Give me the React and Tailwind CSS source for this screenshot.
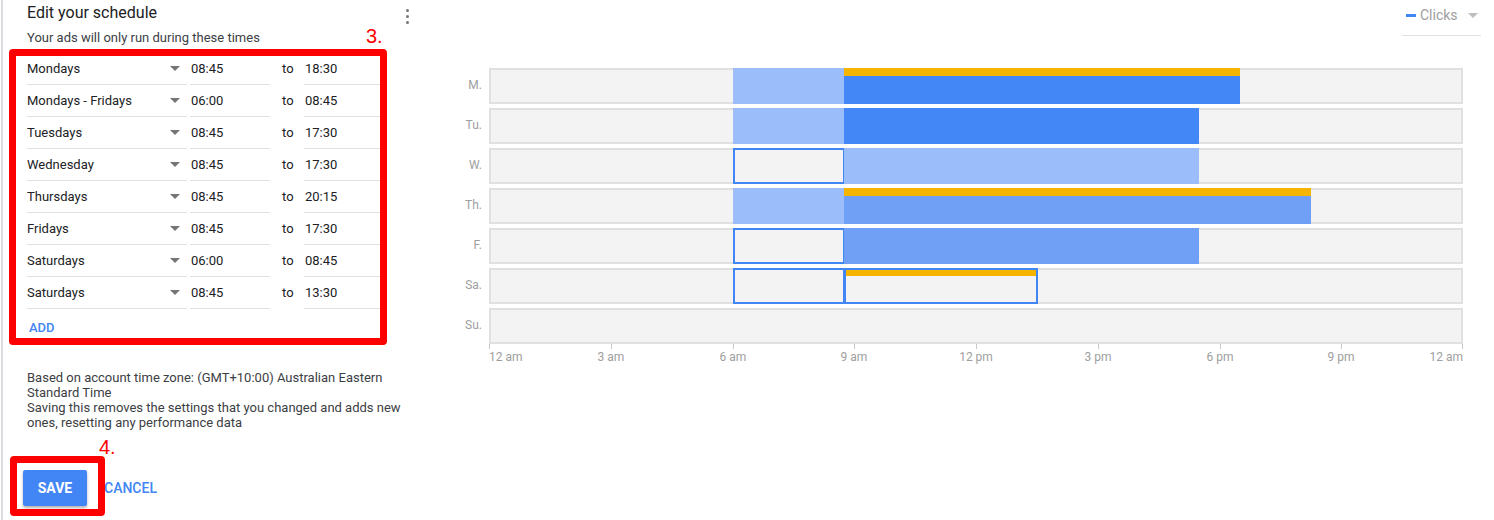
import React from "react";

const font = { fontFamily: "Roboto, 'Liberation Sans', sans-serif" };

const scheduleRows = [
  ["Mondays", "08:45", "18:30"],
  ["Mondays - Fridays", "06:00", "08:45"],
  ["Tuesdays", "08:45", "17:30"],
  ["Wednesday", "08:45", "17:30"],
  ["Thursdays", "08:45", "20:15"],
  ["Fridays", "08:45", "17:30"],
  ["Saturdays", "06:00", "08:45"],
  ["Saturdays", "08:45", "13:30"],
];

const TRACK_W = 974;
const px = (h) => Math.round((h / 24) * TRACK_W);

const days = [
  { label: "M.", segs: [{ from: 6, to: 8.75, kind: "light" }, { from: 8.75, to: 18.5, kind: "dark", yellow: true }] },
  { label: "Tu.", segs: [{ from: 6, to: 8.75, kind: "light" }, { from: 8.75, to: 17.5, kind: "dark" }] },
  { label: "W.", segs: [{ from: 6, to: 8.75, kind: "outline" }, { from: 8.75, to: 17.5, kind: "light" }] },
  { label: "Th.", segs: [{ from: 6, to: 8.75, kind: "light" }, { from: 8.75, to: 20.25, kind: "mid", yellow: true }] },
  { label: "F.", segs: [{ from: 6, to: 8.75, kind: "outline" }, { from: 8.75, to: 17.5, kind: "mid" }] },
  { label: "Sa.", segs: [{ from: 6, to: 8.75, kind: "outline" }, { from: 8.75, to: 13.5, kind: "outline", yellow: true }] },
  { label: "Su.", segs: [] },
];

const segClass = {
  light: "bg-[#9bbdf9]",
  dark: "bg-[#4287f5]",
  mid: "bg-[#6fa0f6]",
  outline: "border-2 border-[#4285f4]",
};

const ticks = ["12 am", "3 am", "6 am", "9 am", "12 pm", "3 pm", "6 pm", "9 pm", "12 am"];

function Caret({ className = "" }) {
  return (
    <svg width="10" height="5" viewBox="0 0 10 5" className={className}>
      <path d="M0 0 L10 0 L5 5 Z" fill="currentColor" />
    </svg>
  );
}

function ScheduleRow({ day, start, end }) {
  return (
    <div className="flex h-[32px] text-[13px] text-[#202124]">
      <div className="w-[160px] border-b border-[#e0e0e0] flex items-center justify-between pr-[7px]">
        <span>{day}</span>
        <Caret className="text-[#757575]" />
      </div>
      <div className="ml-[3px] w-[80px] border-b border-[#e0e0e0] flex items-center pl-[1px]">{start}</div>
      <div className="w-[34px] flex items-center pl-[12px]">to</div>
      <div className="w-[80px] border-b border-[#e0e0e0] flex items-center pl-[1px]">{end}</div>
    </div>
  );
}

function DayRow({ day }) {
  return (
    <div className="flex items-center h-[36px] mb-[4px]">
      <div className="w-[62px] pr-[1px] text-right text-[12px] text-[#9e9e9e] -mt-[2px]">{day.label}</div>
      <div className="relative ml-[6px] w-[974px] h-[36px]">
        <div className="absolute inset-0 bg-[#f3f3f3] border-2 border-[#e0e0e0]" />
        {day.segs.map((s, i) => (
          <div
            key={i}
            className={`absolute top-0 bottom-0 ${segClass[s.kind]}`}
            style={{ left: px(s.from), width: px(s.to) - px(s.from) + (s.kind === "outline" ? 1 : 0) }}
          >
            {s.yellow && (
              <div className={`bg-[#f4b400] ${s.kind === "outline" ? "h-[6px]" : "h-[8px]"}`} />
            )}
          </div>
        ))}
      </div>
    </div>
  );
}

export default function App() {
  return (
    <div className="relative w-[1494px] h-[520px] bg-white overflow-hidden flex" style={font}>
      {/* Left: schedule editor */}
      <div className="ml-[1px] w-[420px] shrink-0 border-l-2 border-[#dadce0] pl-[24px] pr-[12px] pt-[3px]">
        <div className="flex justify-between">
          <h2 className="text-[16px] leading-[20px] text-[#202124]">Edit your schedule</h2>
          <div className="flex flex-col gap-[3px] mt-[6px]">
            <span className="w-[3px] h-[3px] rounded-full bg-[#757575]" />
            <span className="w-[3px] h-[3px] rounded-full bg-[#757575]" />
            <span className="w-[3px] h-[3px] rounded-full bg-[#757575]" />
          </div>
        </div>
        <p className="mt-[6px] text-[13px] leading-[16px] text-[#3c4043]">Your ads will only run during these times</p>

        <div className="mt-[7px]">
          {scheduleRows.map((r, i) => (
            <ScheduleRow key={i} day={r[0]} start={r[1]} end={r[2]} />
          ))}
          <div className="h-[38px] flex items-center pl-[2px] text-[13px] font-medium text-[#4285f4]">ADD</div>
        </div>

        <div className="mt-[23px] text-[13px] leading-[15px] text-[#3c4043] whitespace-nowrap">
          <div>Based on account time zone: (GMT+10:00) Australian Eastern</div>
          <div>Standard Time</div>
          <div>Saving this removes the settings that you changed and adds new</div>
          <div>ones, resetting any performance data</div>
        </div>

        <div className="mt-[40px] flex items-center">
          <button className="-ml-[4px] w-[64px] h-[36px] rounded-[2px] bg-[#4285f4] text-white text-[14px] font-bold shadow-[0_2px_3px_rgba(0,0,0,0.3)]">
            SAVE
          </button>
          <button className="ml-[17px] text-[14px] font-medium text-[#4285f4]">CANCEL</button>
        </div>
      </div>

      {/* Right: chart */}
      <div className="flex-1">
        <div className="h-[68px] flex justify-end pr-[13px]">
          <div className="w-[79px] h-[36px] border-b border-[#e0e0e0] flex items-start pt-[6px] pl-[4px] gap-[4px]">
            <span className="mt-[8px] w-[10px] h-[3px] bg-[#4285f4]" />
            <span className="text-[14px] text-[#9e9e9e] leading-[18px]">Clicks</span>
            <Caret className="mt-[7px] ml-[6px] text-[#bdbdbd]" />
          </div>
        </div>
        {days.map((d) => (
          <DayRow key={d.label} day={d} />
        ))}
        <div className="relative ml-[68px] w-[974px] h-[24px] -mt-[4px]">
          {ticks.map((t, i) => {
            const x = Math.round((i * 3 / 24) * TRACK_W);
            const align = i === 0 ? "" : i === ticks.length - 1 ? "-translate-x-full" : "-translate-x-1/2";
            return (
              <React.Fragment key={i}>
                <div className="absolute top-0 w-px h-[5px] bg-[#c8c8c8]" style={{ left: i === ticks.length - 1 ? x - 1 : x }} />
                <div className={`absolute top-[6px] text-[12px] leading-[14px] text-[#9e9e9e] whitespace-nowrap ${align}`} style={{ left: x }}>
                  {t}
                </div>
              </React.Fragment>
            );
          })}
        </div>
      </div>

      {/* Annotations */}
      <div className="absolute left-[9px] top-[49px] w-[378px] h-[296px] border-[7px] border-[#ff0000] rounded-[4px] pointer-events-none" />
      <div className="absolute left-[366px] top-[25px] text-[20px] leading-[22px] text-[#ff0000]" style={{ fontFamily: "'Liberation Sans', sans-serif" }}>3.</div>
      <div className="absolute left-[10px] top-[456px] w-[95px] h-[60px] border-[7px] border-[#ff0000] rounded-[4px] pointer-events-none" />
      <div className="absolute left-[99px] top-[436px] text-[20px] leading-[22px] text-[#ff0000]" style={{ fontFamily: "'Liberation Sans', sans-serif" }}>4.</div>
    </div>
  );
}
